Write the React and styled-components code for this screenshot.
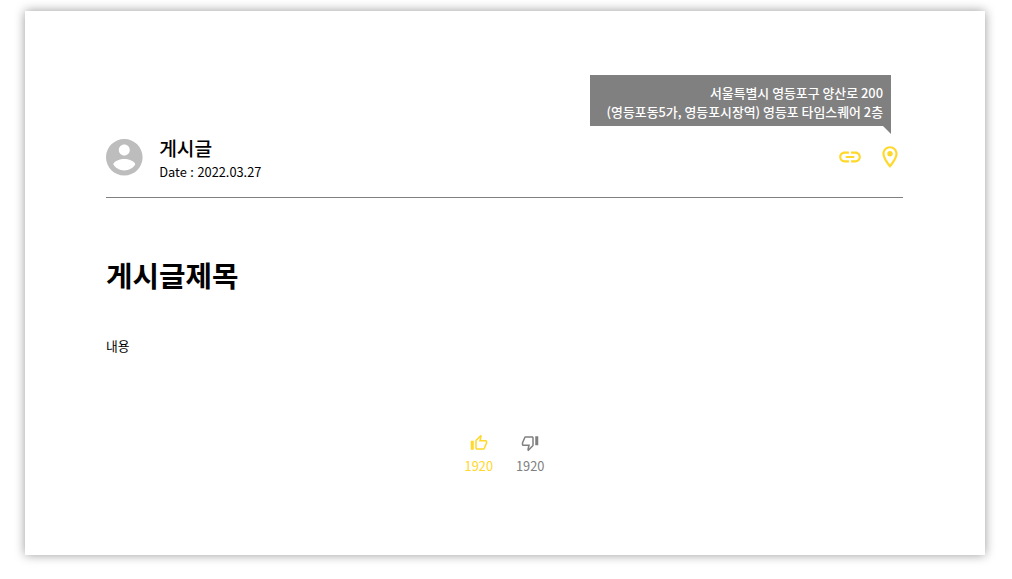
import React from "react";
import styled, { createGlobalStyle } from "styled-components";

const post = {
  writer: "게시글",
  date: "2022.03.27",
  title: "게시글제목",
  content: "내용",
  address: [
    "서울특별시 영등포구 양산로 200",
    "(영등포동5가, 영등포시장역) 영등포 타임스퀘어 2층",
  ],
  likeCount: 1920,
  dislikeCount: 1920,
};

const App = () => {
  return (
    <>
      <GlobalStyle />
      <Wrapper>
        <Header>
          <Avatar viewBox="2 2 20 20">
            <path d="M12 2C6.48 2 2 6.48 2 12s4.48 10 10 10 10-4.48 10-10S17.52 2 12 2zm0 3c1.66 0 3 1.34 3 3s-1.34 3-3 3-3-1.34-3-3 1.34-3 3-3zm0 14.2c-2.5 0-4.71-1.28-6-3.22.03-1.99 4-3.08 6-3.08 1.99 0 5.97 1.09 6 3.08-1.29 1.94-3.5 3.22-6 3.22z" />
          </Avatar>
          <Info>
            <Writer>{post.writer}</Writer>
            <CreatedAt>Date : {post.date}</CreatedAt>
          </Info>
          <Icons>
            <Icon viewBox="0 0 24 24">
              <path d="M3.9 12c0-1.71 1.39-3.1 3.1-3.1h4V7H7c-2.76 0-5 2.24-5 5s2.24 5 5 5h4v-1.9H7c-1.71 0-3.1-1.39-3.1-3.1zM8 13h8v-2H8v2zm9-6h-4v1.9h4c1.71 0 3.1 1.39 3.1 3.1s-1.39 3.1-3.1 3.1h-4V17h4c2.76 0 5-2.24 5-5s-2.24-5-5-5z" />
            </Icon>
            <Icon viewBox="0 0 24 24">
              <path d="M12 2C8.13 2 5 5.13 5 9c0 5.25 7 13 7 13s7-7.75 7-13c0-3.87-3.13-7-7-7zM7 9c0-2.76 2.24-5 5-5s5 2.24 5 5c0 2.88-2.88 7.19-5 9.88C9.92 16.21 7 11.85 7 9z" />
              <circle cx="12" cy="9" r="2.5" />
            </Icon>
            <Tooltip>
              {post.address.map((line) => (
                <Address key={line}>{line}</Address>
              ))}
            </Tooltip>
          </Icons>
        </Header>
        <Title>{post.title}</Title>
        <Contents>{post.content}</Contents>
        <Likes>
          <Like color="#ffd829">
            <LikeIcon viewBox="0 0 24 24">
              <path d="M9 21h9c.83 0 1.54-.5 1.84-1.22l3.02-7.05c.09-.23.14-.47.14-.73v-2c0-1.1-.9-2-2-2h-6.31l.95-4.57.03-.32c0-.41-.17-.79-.44-1.06L14.17 1 7.58 7.59C7.22 7.95 7 8.45 7 9v10c0 1.1.9 2 2 2zM9 9l4.34-4.34L12 10h9v2l-3 7H9V9zM1 9h4v12H1z" />
            </LikeIcon>
            <Count>{post.likeCount}</Count>
          </Like>
          <Like color="#808080">
            <LikeIcon viewBox="0 0 24 24">
              <path d="M15 3H6c-.83 0-1.54.5-1.84 1.22l-3.02 7.05c-.09.23-.14.47-.14.73v2c0 1.1.9 2 2 2h6.31l-.95 4.57-.03.32c0 .41.17.79.44 1.06L9.83 23l6.59-6.59c.36-.36.58-.86.58-1.41V5c0-1.1-.9-2-2-2zm0 12-4.34 4.34L12 14H3v-2l3-7h9v10zm4-12h4v12h-4z" />
            </LikeIcon>
            <Count>{post.dislikeCount}</Count>
          </Like>
        </Likes>
      </Wrapper>
    </>
  );
};

export default App;

const GlobalStyle = createGlobalStyle`
  * {
    box-sizing: border-box;
    margin: 0;
    padding: 0;
  }

  body {
    min-height: 100vh;
    padding: 11px 0 0 25px;
    background: #fff;
    color: #000;
    font-family: "Noto Sans CJK KR", sans-serif;
  }
`;

const Wrapper = styled.main`
  display: flex;
  flex-direction: column;
  width: 960px;
  height: 544px;
  padding: 121px 82px 0 81px;
  box-shadow: 0 0 10px rgba(0, 0, 0, 0.4);
`;

const Header = styled.header`
  display: flex;
  height: 66px;
  padding-top: 7px;
  border-bottom: 1px solid #808080;
`;

const Avatar = styled.svg`
  width: 36.6px;
  height: 36.6px;
  margin-top: 0.2px;
  fill: #bdbdbd;
`;

const Info = styled.div`
  margin: -5px 0 0 16.6px;
`;

const Writer = styled.p`
  font-size: 19.2px;
  font-weight: 500;
  line-height: 28px;
`;

const CreatedAt = styled.p`
  font-size: 12.8px;
  line-height: 19px;
  word-spacing: 0.7px;
`;

const Icons = styled.div`
  position: relative;
  display: flex;
  gap: 14px;
  height: 26px;
  margin: 5px 0 0 auto;
`;

const Icon = styled.svg`
  width: 26px;
  height: 26px;
  fill: #ffd829;
`;

const Tooltip = styled.div`
  position: absolute;
  right: 12px;
  bottom: 44px;
  width: 301px;
  height: 51px;
  padding: 8px 8px 0 0;
  background: #808080;
  color: #fff;
  text-align: right;
  white-space: nowrap;

  &::after {
    content: "";
    position: absolute;
    top: 100%;
    right: 0;
    border-top: 8px solid #808080;
    border-left: 8px solid transparent;
  }
`;

const Address = styled.p`
  font-size: 12.9px;
  font-weight: 500;
  line-height: 19px;
`;

const Title = styled.h1`
  margin-top: 56px;
  font-size: 28.8px;
  font-weight: 700;
  line-height: 42px;
`;

const Contents = styled.p`
  margin-top: 40px;
  font-size: 12.8px;
  line-height: 19px;
`;

const Likes = styled.div`
  display: flex;
  justify-content: center;
  gap: 23px;
  margin-top: 79px;
`;

const Like = styled.div`
  display: flex;
  flex-direction: column;
  align-items: center;
  color: ${({ color }) => color};
`;

const LikeIcon = styled.svg`
  width: 18px;
  height: 18px;
  fill: currentColor;
`;

const Count = styled.span`
  margin-top: 4px;
  font-size: 12.8px;
  line-height: 19px;
`;
